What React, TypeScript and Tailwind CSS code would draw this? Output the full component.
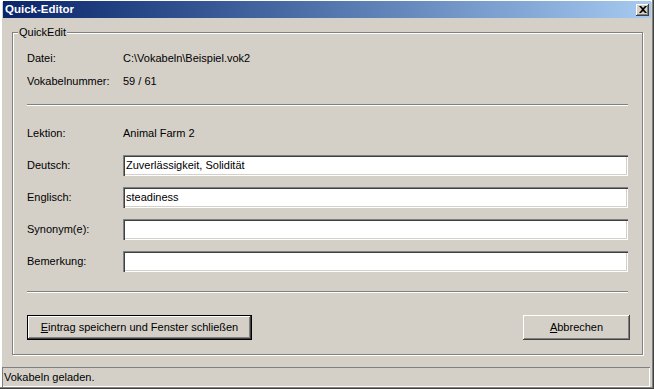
import React from "react";

const font = { fontFamily: '"Liberation Sans", Arial, sans-serif' };

function Sep() {
  return <div className="h-[2px] w-[601px] border-t border-[#808080] border-b border-b-white" />;
}

function Field({ label, value }: { label: string; value: string }) {
  return (
    <div className="flex items-center h-[21px]">
      <div className="w-[96px] text-[11px] text-black">{label}</div>
      <div className="w-[505px] h-[21px] bg-white flex items-center pl-[3px] text-[11px] text-black shadow-[inset_1px_1px_0_#808080,inset_2px_2px_0_#404040,inset_-1px_-1px_0_#ffffff,inset_-2px_-2px_0_#d4d0c8]">
        {value}
      </div>
    </div>
  );
}

function InfoRow({ label, value }: { label: string; value: string }) {
  return (
    <div className="flex items-center h-[16px] text-[11px] text-black">
      <div className="w-[96px]">{label}</div>
      <div>{value}</div>
    </div>
  );
}

export default function App() {
  return (
    <div
      style={font}
      className="w-[654px] h-[389px] bg-[#d4d0c8] flex flex-col overflow-hidden shadow-[inset_-1px_-1px_0_#404040,inset_-2px_-2px_0_#808080,inset_2px_2px_0_#ffffff]"
    >
      {/* Title bar */}
      <div className="mt-[1px] mx-[3px] h-[17px] flex items-center justify-between bg-gradient-to-r from-[#0a246a] to-[#a6caf0] pl-[2px] pr-[2px]">
        <span className="text-white font-bold text-[11.5px] leading-none">Quick-Editor</span>
        <div className="w-[13px] h-[12px] bg-[#d4d0c8] flex items-center justify-center shadow-[inset_-1px_-1px_0_#404040,inset_1px_1px_0_#ffffff,inset_-2px_-2px_0_#808080]">
          <svg width="8" height="7" viewBox="0 0 8 7">
            <path d="M0 0h2l2 2 2-2h2L5 3.5 8 7H6L4 5 2 7H0l3-3.5z" fill="#000" />
          </svg>
        </div>
      </div>

      {/* Group box */}
      <div className="relative ml-[12px] mt-[14px] w-[631px] h-[323px] border border-[#808080] shadow-[inset_1px_1px_0_#ffffff,1px_1px_0_#ffffff] pl-[14px] pt-[17px]">
        <div className="absolute left-[5px] top-[-7px] px-[1px] bg-[#d4d0c8] text-[11px] leading-[13px] text-black">
          QuickEdit
        </div>
        <InfoRow label="Datei:" value="C:\Vokabeln\Beispiel.vok2" />
        <div className="mt-[7px]">
          <InfoRow label="Vokabelnummer:" value="59 / 61" />
        </div>
        <div className="mt-[15px]">
          <Sep />
        </div>
        <div className="mt-[19px]">
          <InfoRow label="Lektion:" value="Animal Farm 2" />
        </div>
        <div className="mt-[14px] flex flex-col gap-[11px]">
          <Field label="Deutsch:" value="Zuverlässigkeit, Solidität" />
          <Field label="Englisch:" value="steadiness" />
          <Field label="Synonym(e):" value="" />
          <Field label="Bemerkung:" value="" />
        </div>
        <div className="mt-[19px]">
          <Sep />
        </div>
        <div className="mt-[22px] flex justify-between w-[603px]">
          <div className="w-[225px] h-[25px] border border-black">
            <div className="w-full h-full flex items-center justify-center text-[11px] text-black shadow-[inset_-1px_-1px_0_#404040,inset_1px_1px_0_#ffffff,inset_-2px_-2px_0_#808080]">
              <span>
                <span className="underline">E</span>intrag speichern und Fenster schließen
              </span>
            </div>
          </div>
          <div className="w-[107px] h-[25px] flex items-center justify-center text-[11px] text-black shadow-[inset_-1px_-1px_0_#404040,inset_1px_1px_0_#ffffff,inset_-2px_-2px_0_#808080]">
            <span>
              <span className="underline">A</span>bbrechen
            </span>
          </div>
        </div>
      </div>

      {/* Status bar */}
      <div className="mt-[12px] ml-[2px] w-[648px] h-[20px] flex items-center pl-[2px] pt-[1px] text-[11px] text-black shadow-[inset_1px_1px_0_#808080,inset_-1px_-1px_0_#ffffff]">
        Vokabeln geladen.
      </div>
    </div>
  );
}
